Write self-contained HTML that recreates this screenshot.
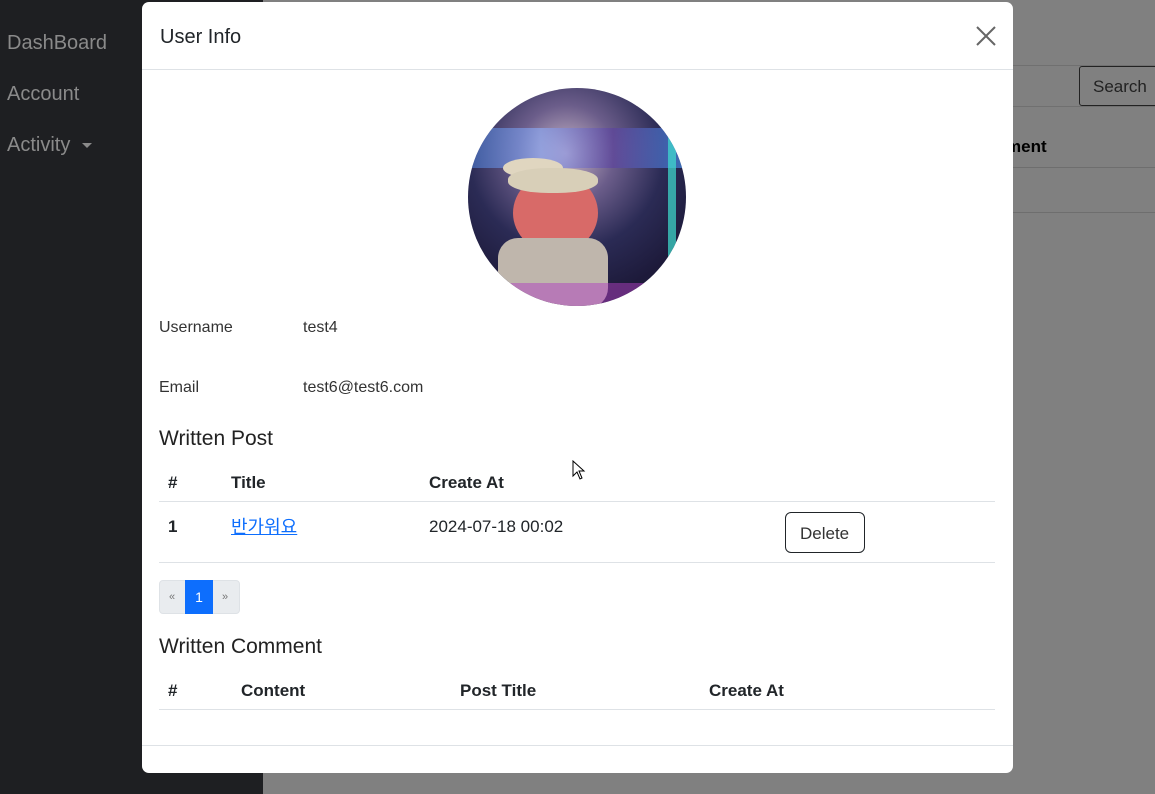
<!DOCTYPE html>
<html><head><meta charset="utf-8"><style>
*{box-sizing:border-box;margin:0;padding:0}
body{width:1155px;height:794px;overflow:hidden;position:relative;background:#808080;font-family:"Liberation Sans","Noto Sans CJK KR",sans-serif;color:#212529}
.side{position:absolute;left:0;top:0;width:263px;height:794px;background:#1e1f22}
.side div{position:absolute;left:7px;font-size:20px;color:#8a8a8a}
.bg{position:absolute;color:#000}
.modal{position:absolute;left:142px;top:2px;width:871px;height:771px;background:#fff;border-radius:7px}
.hdr{height:68px;border-bottom:1px solid #dee2e6;position:relative}
.hdr h5{position:absolute;left:18px;top:24px;font-size:20px;font-weight:normal}
.x{position:absolute;left:834px;top:24px}
.t{position:absolute;font-size:16px}
.b{font-weight:bold}
.line{position:absolute;left:17px;width:836px;height:1px;background:#dee2e6}
</style></head><body>
<div class="side">
<div style="top:32px">DashBoard</div>
<div style="top:83px">Account</div>
<div style="top:134px">Activity <span style="display:inline-block;width:0;height:0;border-left:5px solid transparent;border-right:5px solid transparent;border-top:5px solid #8a8a8a;vertical-align:middle;margin-left:6px"></span></div>
</div>
<div style="position:absolute;left:1012px;top:65px;width:143px;height:1px;background:#707070"></div>
<div style="position:absolute;left:1079px;top:66px;width:80px;height:40px;border:1px solid #222;border-radius:3px 0 0 3px;color:#222;font-size:17px;padding:10px 0 0 13px">Search</div>
<div style="position:absolute;left:1012px;top:106px;width:143px;height:1px;background:#707070"></div>
<div class="bg" style="left:1006px;top:137px;font-size:17px;font-weight:bold;color:#000">ment</div>
<div style="position:absolute;left:1012px;top:167px;width:143px;height:1px;background:#6e6e6e"></div>
<div style="position:absolute;left:1012px;top:212px;width:143px;height:1px;background:#6e6e6e"></div>
<div class="modal">
<div class="hdr"><h5>User Info</h5>
<svg class="x" width="20" height="20" viewBox="0 0 20 20"><path d="M1 1L19 19M19 1L1 19" stroke="#666" stroke-width="2"/></svg></div>
<div style="position:absolute;left:326px;top:86px;width:218px;height:218px;border-radius:50%;overflow:hidden;background:radial-gradient(circle at 45% 30%,#c9b7c8 0,#6b5d8a 25%,#2b2b55 50%,#1d1a3a 75%);">
<div style="position:absolute;left:0;top:40px;width:218px;height:40px;background:linear-gradient(90deg,#4a7ad0,#8fb0ff,#5a3fa0,#4aa0ff);opacity:.6"></div>
<div style="position:absolute;left:200px;top:0;width:8px;height:218px;background:#3fe0d0;opacity:.7"></div>
<div style="position:absolute;left:35px;top:70px;width:60px;height:20px;border-radius:50%;background:#e0d6c0"></div>
<div style="position:absolute;left:45px;top:85px;width:85px;height:80px;border-radius:50%;background:#d86a68"></div>
<div style="position:absolute;left:40px;top:80px;width:90px;height:25px;border-radius:45%;background:#d8cfb8"></div>
<div style="position:absolute;left:30px;top:150px;width:110px;height:70px;background:#bfb6ac;border-radius:20px"></div>
<div style="position:absolute;left:0;top:195px;width:218px;height:30px;background:#b040c0;opacity:.5"></div>
</div>
<div class="t" style="left:17px;top:317px;color:#333">Username</div>
<div class="t" style="left:161px;top:317px;color:#333">test4</div>
<div class="t" style="left:17px;top:377px;color:#333">Email</div>
<div class="t" style="left:161px;top:377px;color:#333">test6@test6.com</div>
<div class="t" style="left:17px;top:425px;font-size:21px;color:#222">Written Post</div>
<div class="t b" style="left:26px;top:471px;font-size:17px">#</div>
<div class="t b" style="left:89px;top:471px;font-size:17px">Title</div>
<div class="t b" style="left:287px;top:471px;font-size:17px">Create At</div>
<div class="line" style="top:499px"></div>
<div class="t b" style="left:26px;top:515px;font-size:17px">1</div>
<div class="t" style="left:89px;top:511px;font-size:18px;color:#0d6efd;text-decoration:underline">반가워요</div>
<div class="t" style="left:287px;top:515px;font-size:17px">2024-07-18 00:02</div>
<div style="position:absolute;left:643px;top:510px;width:80px;height:41px;border:1px solid #212529;border-radius:6px;font-size:17px;padding:11px 0 0 14px;color:#333">Delete</div>
<div class="line" style="top:560px"></div>
<div style="position:absolute;left:17px;top:578px;width:81px;height:34px;background:#e9ecef;border-radius:4px;border:1px solid #dee2e6"></div>
<div class="t" style="left:27px;top:589px;font-size:11px;color:#777">«</div>
<div style="position:absolute;left:43px;top:578px;width:28px;height:34px;background:#0d6efd;color:#fff;font-size:14px;text-align:center;line-height:34px">1</div>
<div class="t" style="left:80px;top:589px;font-size:11px;color:#777">»</div>
<div class="t" style="left:17px;top:633px;font-size:21px;color:#222">Written Comment</div>
<div class="t b" style="left:26px;top:679px;font-size:17px">#</div>
<div class="t b" style="left:99px;top:679px;font-size:17px">Content</div>
<div class="t b" style="left:318px;top:679px;font-size:17px">Post Title</div>
<div class="t b" style="left:567px;top:679px;font-size:17px">Create At</div>
<div class="line" style="top:707px"></div>
<div style="position:absolute;left:0;top:743px;width:871px;height:1px;background:#dee2e6"></div>
</div>
<svg style="position:absolute;left:572px;top:460px" width="14" height="20" viewBox="0 0 14 20"><path d="M1 1L1 16L5 12L8 19L10 18L7 11L12 11Z" fill="#fff" stroke="#000" stroke-width="1"/></svg>
</body></html>
